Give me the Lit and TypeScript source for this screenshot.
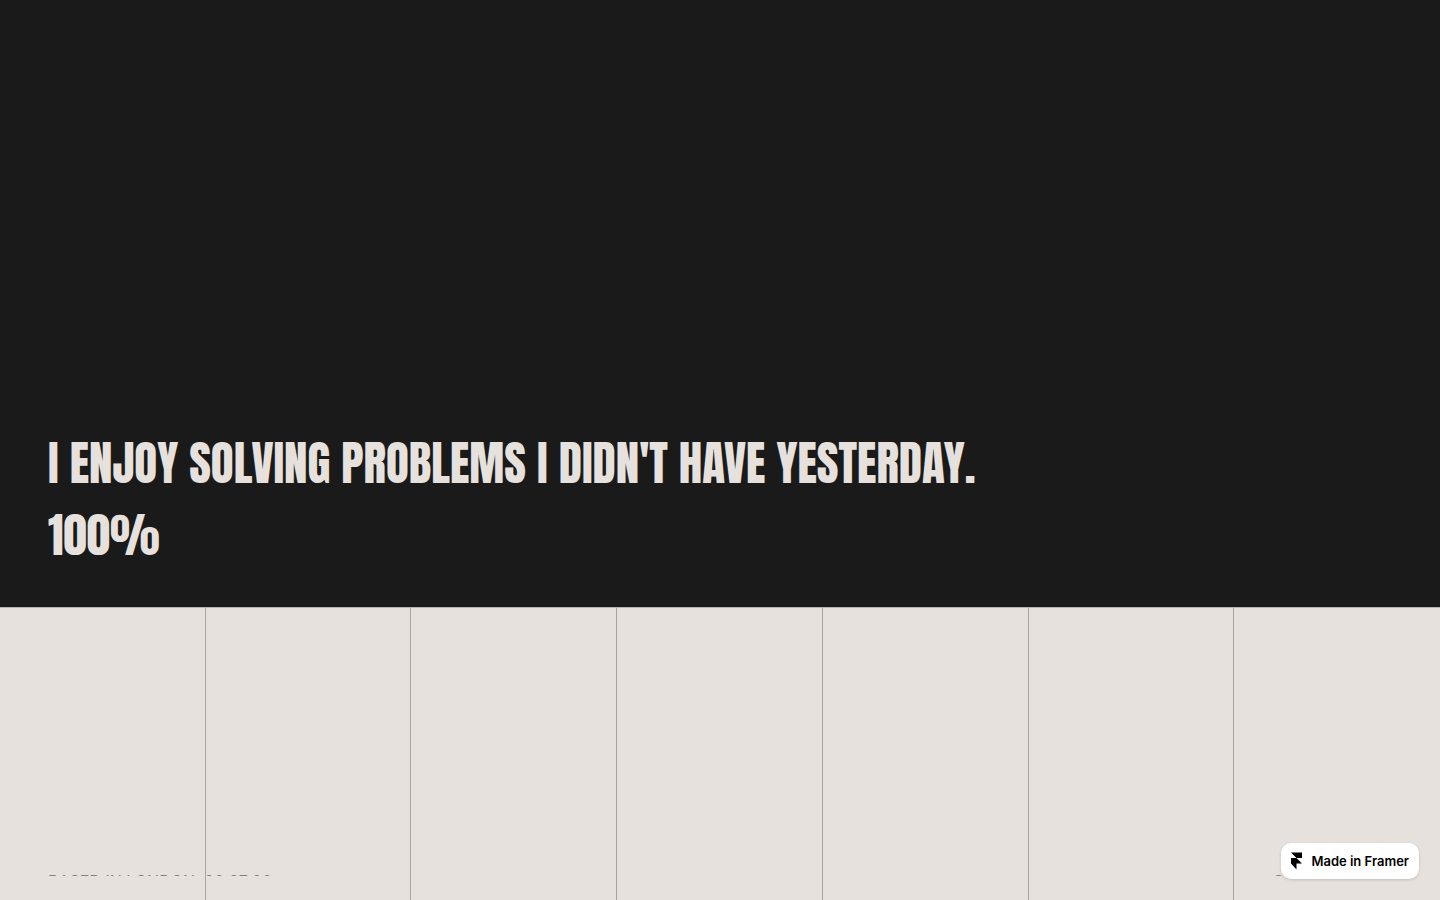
import { LitElement, html, css } from "lit";
import { customElement } from "lit/decorators.js";

@customElement("app-root")
export class AppRoot extends LitElement {
  static styles = css`
    :host { display: block; background: #e6e1dd; font-family: Inter, sans-serif; }
    .page { position: relative; min-height: 100vh; display: grid; grid-template-rows: 607fr 293fr; }
    .curtain {
      display: flex; flex-direction: column; justify-content: flex-end;
      padding: 0 48px 36px; background: #1a1a1a; color: #e6e1dd;
      font-family: Anton, Impact, sans-serif; font-weight: 400; font-size: 47px; line-height: 72px;
    }
    .curtain h1, .curtain p { margin: 0; font-size: inherit; font-weight: inherit; }
    .hero { position: relative; display: flex; flex-direction: column; justify-content: flex-end; }
    .grid {
      position: absolute; inset: 0; display: grid; grid-template-columns: repeat(7, 1fr);
      border-top: 1px solid #b9b3af;
    }
    .col:not(:last-child) { border-right: 1px solid #aaa29e; }
    .footer {
      display: flex; justify-content: space-between; padding: 0 48px 24px;
      font-size: 16px; line-height: 20px; color: #85807c;
    }
    /* Each line waits below its mask, with only its top edge showing. */
    .mask { overflow: hidden; }
    .line { display: block; transform: translateY(75%); }
    .badge {
      position: absolute; right: 21px; bottom: 21px; display: flex; align-items: center; gap: 9px;
      box-sizing: border-box; height: 36px; padding: 0 10px; border-radius: 10px;
      background: #fff; color: #000; font-size: 13px; font-weight: 600; text-decoration: none;
      box-shadow: 0 1px 3px rgba(0, 0, 0, 0.16);
    }
    .badge svg { display: block; width: 11px; height: 18px; }
  `;

  render() {
    return html`
      <main class="page">
        <section class="curtain">
          <h1>I ENJOY SOLVING PROBLEMS I DIDN'T HAVE YESTERDAY.</h1>
          <p>100%</p>
        </section>
        <section class="hero">
          <div class="grid">${Array.from({ length: 7 }, () => html`<div class="col"></div>`)}</div>
          <div class="footer">
            <div class="mask"><span class="line">BASED IN LONDON, 00:27:00</span></div>
            <div class="mask"><span class="line">SCROLL DOWN</span></div>
          </div>
        </section>
        <a class="badge" href="#framer">
          <svg viewBox="0 0 11 18" aria-hidden="true"><path d="M0 0.5H11V6H5.5ZM0 6H5.5L11 11.5H5.5V17.5L0 11.5Z"/></svg>
          <span>Made in Framer</span>
        </a>
      </main>
    `;
  }
}
